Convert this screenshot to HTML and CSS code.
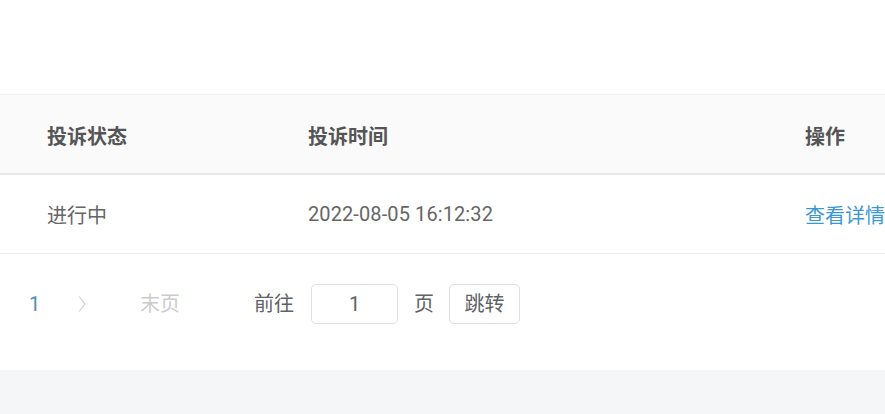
FILE: index.html
```html
<!DOCTYPE html>
<html lang="zh-CN">
<head>
<meta charset="utf-8">
<link rel="stylesheet" href="styles.css">
</head>
<body>
<div class="page">
  <div class="top"></div>
  <div class="table">
    <div class="row head">
      <div class="cell">投诉状态</div>
      <div class="cell">投诉时间</div>
      <div class="cell">操作</div>
    </div>
    <div class="row body">
      <div class="cell">进行中</div>
      <div class="cell time">2022-08-05 16:12:32</div>
      <div class="cell link">查看详情</div>
    </div>
  </div>
  <div class="pager">
    <span class="num">1</span>
    <span class="next"><svg width="10" height="18" viewBox="0 0 10 18"><path d="M2 1.5 L8 9 L2 16.5" fill="none" stroke="#cfcfcf" stroke-width="1.2"/></svg></span>
    <span class="last">末页</span>
    <span class="goto">前往</span>
    <span class="input">1</span>
    <span class="unit">页</span>
    <span class="btn">跳转</span>
  </div>
  <div class="foot"></div>
</div>
</body>
</html>
```
FILE: styles.css
```css
html, body {
  margin: 0;
  padding: 0;
  background: #ffffff;
}
.page {
  width: 885px;
  height: 414px;
  overflow: hidden;
  font-family: Roboto, "Noto Sans CJK SC", sans-serif;
  font-size: 20px;
  color: #666666;
}
.top {
  height: 94px;
  background: #ffffff;
}
.row {
  display: grid;
  grid-template-columns: 261px 497px 1fr;
  padding-left: 47px;
  align-items: center;
  white-space: nowrap;
}
.head {
  background: #fafafa;
  border-top: 1px solid #f0f0f0;
  border-bottom: 2px solid #e8e8e8;
  color: #555555;
  font-weight: 700;
  box-sizing: border-box;
  height: 81px;
  padding-top: 2px;
}
.body {
  height: 79px;
  border-bottom: 1px solid #eeeeee;
  box-sizing: border-box;
}
.time {
  letter-spacing: 0.1px;
}
.link {
  color: #3b98d3;
}
.pager {
  height: 116px;
  box-sizing: border-box;
  padding-top: 30px;
  padding-left: 29px;
  display: flex;
  align-items: flex-start;
  white-space: nowrap;
}
.pager > span {
  height: 40px;
  line-height: 40px;
  display: flex;
  align-items: center;
}
.num {
  color: #4a8dc4;
  width: 9px;
}
.next {
  margin-left: 39px;
}
.last {
  margin-left: 53px;
  color: #cccccc;
}
.goto {
  margin-left: 74px;
  color: #606266;
}
.input {
  margin-left: 17px;
  width: 87px;
  box-sizing: border-box;
  border: 1px solid #dcdfe6;
  border-radius: 5px;
  justify-content: center;
  color: #606266;
}
.unit {
  margin-left: 16px;
  color: #606266;
}
.btn {
  margin-left: 15px;
  width: 71px;
  box-sizing: border-box;
  border: 1px solid #dcdfe6;
  border-radius: 5px;
  justify-content: center;
  color: #606266;
}
.foot {
  height: 45px;
  background: #f5f6f7;
}
```
